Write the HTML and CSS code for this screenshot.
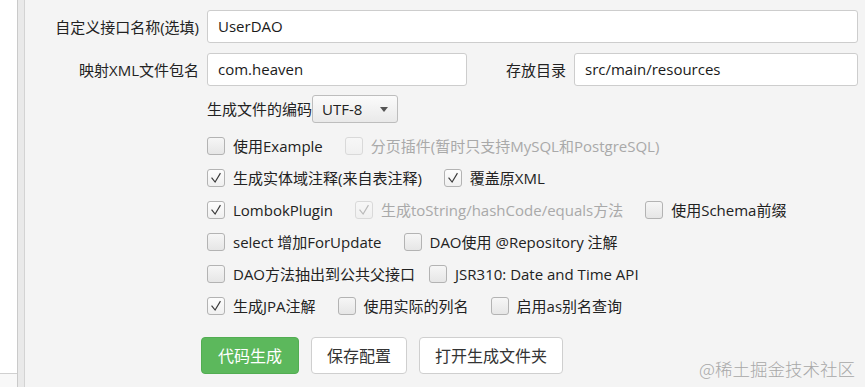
FILE: index.html
```html
<!DOCTYPE html>
<html lang="zh">
<head>
<meta charset="utf-8">
<title>代码生成配置</title>
<link rel="stylesheet" href="styles.css">
</head>
<body>
<div class="app">
  <div class="side">
    <div class="side-top"></div>
    <div class="side-bot"></div>
  </div>
  <div class="divider"></div>
  <div class="main">
    <div class="row">
      <label class="lbl">自定义接口名称(选填)</label>
      <div class="input grow">UserDAO</div>
    </div>
    <div class="row row2">
      <label class="lbl">映射XML文件包名</label>
      <div class="input pkg">com.heaven</div>
      <label class="lbl2">存放目录</label>
      <div class="input grow">src/main/resources</div>
    </div>
    <div class="enc">
      <span>生成文件的编码</span>
      <div class="select">UTF-8<span class="caret"></span></div>
    </div>

    <div class="checks">
      <div class="crow">
        <div class="item"><span class="box"></span><span>使用Example</span></div>
        <div class="item dis"><span class="box"></span><span>分页插件(暂时只支持MySQL和PostgreSQL)</span></div>
      </div>
      <div class="crow">
        <div class="item"><span class="box on"><svg viewBox="0 0 18 18"><polyline points="4,8.5 8,13.5 14,3.5"/></svg></span><span>生成实体域注释(来自表注释)</span></div>
        <div class="item"><span class="box on"><svg viewBox="0 0 18 18"><polyline points="4,8.5 8,13.5 14,3.5"/></svg></span><span>覆盖原XML</span></div>
      </div>
      <div class="crow">
        <div class="item"><span class="box on"><svg viewBox="0 0 18 18"><polyline points="4,8.5 8,13.5 14,3.5"/></svg></span><span>LombokPlugin</span></div>
        <div class="item dis"><span class="box on"><svg viewBox="0 0 18 18"><polyline points="4,8.5 8,13.5 14,3.5"/></svg></span><span>生成toString/hashCode/equals方法</span></div>
        <div class="item"><span class="box"></span><span>使用Schema前缀</span></div>
      </div>
      <div class="crow">
        <div class="item"><span class="box"></span><span>select 增加ForUpdate</span></div>
        <div class="item"><span class="box"></span><span>DAO使用 @Repository 注解</span></div>
      </div>
      <div class="crow tight">
        <div class="item"><span class="box"></span><span>DAO方法抽出到公共父接口</span></div>
        <div class="item"><span class="box"></span><span>JSR310: Date and Time API</span></div>
      </div>
      <div class="crow">
        <div class="item"><span class="box on"><svg viewBox="0 0 18 18"><polyline points="4,8.5 8,13.5 14,3.5"/></svg></span><span>生成JPA注解</span></div>
        <div class="item"><span class="box"></span><span>使用实际的列名</span></div>
        <div class="item"><span class="box"></span><span>启用as别名查询</span></div>
      </div>
    </div>

    <div class="btns">
      <button class="btn primary">代码生成</button>
      <button class="btn">保存配置</button>
      <button class="btn">打开生成文件夹</button>
    </div>
  </div>
</div>
<div class="watermark">@稀土掘金技术社区</div>
</body>
</html>
```

FILE: styles.css
```css
* { box-sizing: border-box; }
html, body {
  margin: 0;
  padding: 0;
  width: 865px;
  height: 387px;
  overflow: hidden;
  background: #f4f4f4;
  font-family: "Open Sans", "Noto Sans CJK SC", sans-serif;
  font-size: 15px;
  color: #222;
}
.app {
  display: flex;
  height: 387px;
}
.side {
  width: 18px;
  display: flex;
  flex-direction: column;
  border-right: 1px solid #cacaca;
}
.side-top {
  height: 374px;
  background: #fff;
  border-bottom: 1px solid #d0d0d0;
}
.side-bot {
  flex: 1;
  background: #f8f8f8;
}
.divider {
  width: 7px;
  background: #e9e9e9;
  border-right: 1px solid #d3d3d3;
}
.main {
  flex: 1;
  padding: 10px 7px 0 0;
  display: flex;
  flex-direction: column;
}
.row {
  display: flex;
  align-items: center;
  gap: 8px;
  height: 33px;
}
.row2 { margin-top: 10px; }
.lbl {
  width: 174px;
  text-align: right;
  line-height: 20px;
  white-space: nowrap;
}
.lbl2 {
  margin-left: 31px;
  white-space: nowrap;
  line-height: 20px;
}
.input {
  height: 33px;
  background: #fff;
  border: 1px solid #cdcdcd;
  border-radius: 3px;
  padding: 0 10px;
  line-height: 31px;
  white-space: nowrap;
  color: #1a1a1a;
}
.grow { flex: 1; }
.pkg { width: 260px; }
.enc {
  margin-top: 9px;
  margin-left: 182px;
  display: flex;
  align-items: center;
  height: 28px;
}
.enc > span { line-height: 20px; }
.select {
  width: 86px;
  height: 28px;
  border: 1px solid #bdbdbd;
  border-radius: 3px;
  background: linear-gradient(#fbfbfb, #e9e9e9);
  padding-left: 9px;
  display: flex;
  align-items: center;
  line-height: 20px;
}
.caret {
  margin-left: auto;
  margin-right: 9px;
  width: 0;
  height: 0;
  border-left: 4.5px solid transparent;
  border-right: 4.5px solid transparent;
  border-top: 5px solid #555;
}
.checks {
  margin-top: 12px;
  margin-left: 182px;
  display: flex;
  flex-direction: column;
  gap: 10px;
}
.crow {
  display: flex;
  align-items: center;
  gap: 22px;
  height: 22px;
}
.crow.tight { gap: 14px; }
.item {
  display: flex;
  align-items: center;
  gap: 8px;
  white-space: nowrap;
  line-height: 20px;
}
.box {
  width: 18px;
  height: 18px;
  flex: none;
  border: 1px solid #b3b3b3;
  border-radius: 3px;
  background: linear-gradient(#f6f6f6, #e6e6e6);
  display: flex;
  align-items: center;
  justify-content: center;
}
.box.on { background: linear-gradient(#fdfdfd, #f0f0f0); }
.box svg {
  width: 18px;
  height: 18px;
  fill: none;
  stroke: #3a3a3a;
  stroke-width: 1.3;
}
.item.dis { color: #a9a9a9; }
.item.dis .box {
  border-color: #d9d9d9;
  background: linear-gradient(#f7f7f7, #f0f0f0);
}
.item.dis .box svg { stroke: #b9b9b9; }
.btns {
  margin-top: 20px;
  margin-left: 176px;
  display: flex;
  gap: 12px;
}
.btn {
  height: 37px;
  padding: 0 15px;
  font-family: "Noto Sans CJK SC", sans-serif;
  font-size: 16px;
  color: #333;
  background: #fff;
  border: 1px solid #cfcfcf;
  border-radius: 4px;
  line-height: 35px;
}
.btn.primary {
  padding: 0 16px;
  background: #5cb85c;
  border-color: #52ad52;
  color: #fff;
}
.watermark {
  position: absolute;
  left: 699px;
  top: 358px;
  font-family: "Noto Sans CJK SC", sans-serif;
  font-weight: 300;
  font-size: 17.5px;
  line-height: 22px;
  color: #a8a8a8;
  white-space: nowrap;
}
```
